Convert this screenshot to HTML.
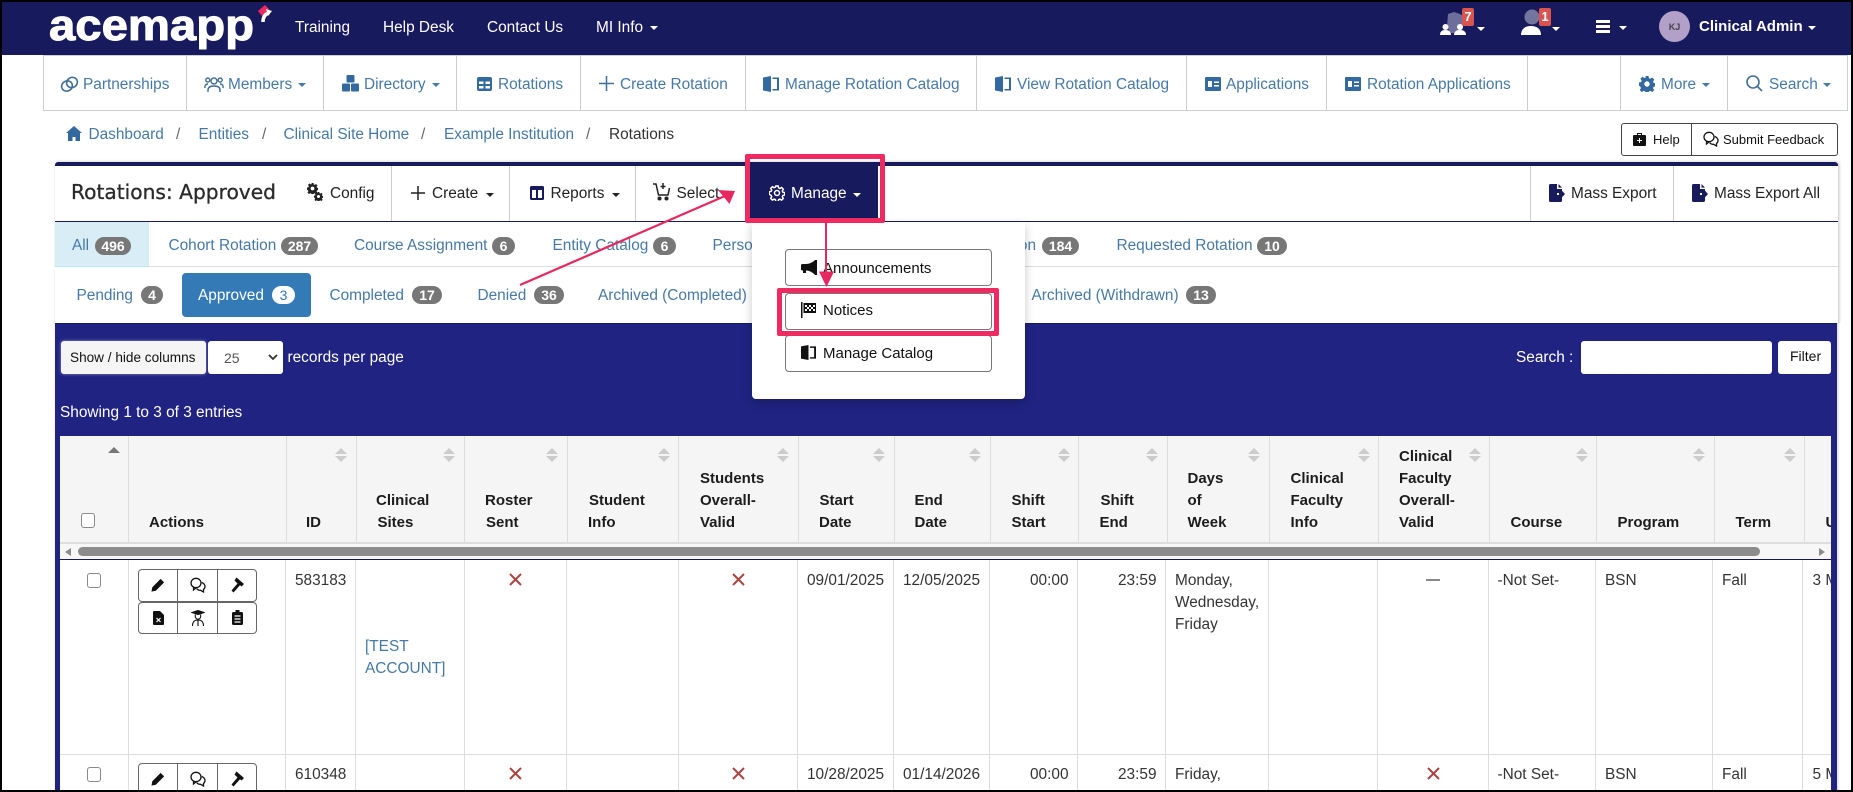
<!DOCTYPE html>
<html><head><meta charset="utf-8"><title>Rotations: Approved</title>
<style>
html,body{margin:0;padding:0;background:#fff}
#r{position:relative;width:1853px;height:792px;overflow:hidden;background:#fff;font-family:"Liberation Sans",sans-serif;font-size:15.4px;color:#333;filter:blur(.35px)}
#r div,#r span,#r svg{position:absolute}
.t{white-space:nowrap;line-height:22px;height:22px;margin-top:1px}
.w{color:#fff}.b{color:#4679a6}.d{color:#222}.k{color:#111}
.h{font-weight:bold;color:#1c1c1c;font-size:15px}
.c{width:0;height:0;border-left:4px solid transparent;border-right:4px solid transparent;border-top:4.5px solid currentColor}
.v{width:1px;background:#ccc}
.g{background:#777;color:#fff;font-weight:bold;font-size:14px;height:18px;line-height:18px;border-radius:9px;text-align:center}
.su{width:0;height:0;border-left:6px solid transparent;border-right:6px solid transparent;border-bottom:6.5px solid #ccc;top:448px}
.sd{width:0;height:0;border-left:6px solid transparent;border-right:6px solid transparent;border-top:6.5px solid #ccc;top:456px}
.cb{width:12px;height:13px;border:1px solid #8a8a8a;border-radius:3px;background:#fff}
.ab{border:1px solid #666;border-radius:4px;background:#fff;box-sizing:border-box}
.dd{left:785px;width:207px;height:37px;box-sizing:border-box;border:1px solid #777;border-radius:4px;background:#fff}
</style></head><body><div id="r">

<svg width="0" height="0" style="left:0;top:0"><defs>
<symbol id="cat" viewBox="0 0 16 16"><path fill="currentColor" d="M0 1.500L8 0v16L0 14.500zM9.500 1.500H16v13H9.500v-1.500H14V3H9.500z"/></symbol>
<symbol id="idc" viewBox="0 0 16 14"><path fill="currentColor" fill-rule="evenodd" d="M1 0h14a1 1 0 0 1 1 1v12a1 1 0 0 1-1 1H1a1 1 0 0 1-1-1V1a1 1 0 0 1 1-1zM3 4v6h4V4zM9 4.500V6h5V4.500zM9 8v1.500h5V8z"/></symbol>
<symbol id="exp" viewBox="0 0 16 18"><path fill="currentColor" d="M1.500 0H8v5h5v4H8v2h5v5.500a1.500 1.500 0 0 1-1.500 1.500h-10A1.500 1.500 0 0 1 0 16.500V1.500A1.500 1.500 0 0 1 1.500 0zM9.500 0L13 3.600H9.500zM13 6.800l3 3.200-3 3.200V11h-3V9h3z"/></symbol>
<symbol id="pen" viewBox="0 0 16 16"><path fill="currentColor" d="M11 1l4 4-9.500 9.500L0.500 15.500l1-5z"/></symbol>
<symbol id="cmt" viewBox="0 0 16 16"><g fill="none" stroke="currentColor" stroke-width="1.300"><ellipse cx="6" cy="6" rx="5" ry="4.700"/><path d="M3.500 10v3l3-2.500"/><path d="M11.800 5.500c2 .8 3.200 2.300 3.200 4 0 1.200-.6 2.200-1.500 2.900v2.600l-3-1.700c-1.500 0-3-.6-3.800-1.700"/></g></symbol>
<symbol id="gav" viewBox="0 0 16 16"><path fill="currentColor" d="M6.500 .5L14 7l-2.500 2.500L10 8.200 3.500 15.500 1.500 13.500 7.500 6.500 4.500 3.500z"/></symbol>
<symbol id="gear" viewBox="0 0 16 16"><path fill="currentColor" fill-rule="evenodd" d="M6.500 0h3l.4 2.200 1.400.6 1.900-1.300 2.100 2.100-1.300 1.900.6 1.400 2.200.4v3l-2.200.4-.6 1.400 1.300 1.900-2.100 2.100-1.900-1.300-1.400.6-.4 2.200h-3l-.4-2.200-1.400-.6-1.900 1.300-2.100-2.100 1.300-1.900-.6-1.400L-.1 9.500v-3l2.200-.4.6-1.400L1.400 2.800l2.100-2.100 1.900 1.300 1.400-.6zM8 5.300a2.700 2.700 0 1 0 0 5.400 2.700 2.700 0 0 0 0-5.400z"/></symbol>
</defs></svg>

<!-- header -->
<div style="left:0;top:0;width:1853px;height:55px;background:#181a5e"></div>
<svg style="left:44px;top:0" width="240" height="55" viewBox="0 0 240 55"><text x="5" y="40" font-family="Liberation Sans" font-weight="bold" font-size="44" fill="#fff" stroke="#fff" stroke-width="1" stroke-linejoin="round" textLength="205" lengthAdjust="spacingAndGlyphs">acemapp</text><path d="M214 11l7-6 4 4-7 7z" fill="#ee2a60"/><path d="M219 22c0-5 2-8 6-9" fill="none" stroke="#fff" stroke-width="3.500"/><path d="M222 9l6 2-4 5z" fill="#fff"/></svg>
<span class="t w" style="left:295px;top:16px">Training</span>
<span class="t w" style="left:383px;top:16px">Help Desk</span>
<span class="t w" style="left:487px;top:16px">Contact Us</span>
<span class="t w" style="left:596px;top:16px">MI Info</span>
<div class="c w" style="left:650px;top:26px"></div>

<svg style="left:1440px;top:10px" width="32" height="26" viewBox="0 0 32 26"><path d="M8 4l6-2 6 2 3 2v12l-3 5h-9l-4-6z" fill="#6d6e9c"/><circle cx="5.500" cy="17" r="3" fill="#fff"/><path d="M0 25c0-3.500 2-5 5.500-5s5.500 1.500 5.500 5z" fill="#fff"/><circle cx="20" cy="17" r="3" fill="#fff"/><path d="M14 25c0-3.500 2.500-5 6-5s6 1.500 6 5z" fill="#fff"/></svg>
<div style="left:1462px;top:8px;width:12px;height:18px;background:#d9534f;border-radius:2px"></div>
<span style="left:1462px;top:8px;width:12px;text-align:center;color:#fff;font-weight:bold;font-size:13px;line-height:18px">7</span>
<div class="c w" style="left:1477px;top:27px"></div>
<svg style="left:1521px;top:9px" width="22" height="27" viewBox="0 0 22 27"><circle cx="11" cy="8" r="7.500" fill="#74759f"/><path d="M0 26c0-6 4-9 10-9s10 3 10 9z" fill="#fff"/></svg>
<div style="left:1539px;top:8px;width:12px;height:18px;background:#d9534f;border-radius:2px"></div>
<span style="left:1539px;top:8px;width:12px;text-align:center;color:#fff;font-weight:bold;font-size:13px;line-height:18px">1</span>
<div class="c w" style="left:1552px;top:27px"></div>
<div style="left:1596px;top:20px;width:14px;height:2.500px;background:#fff"></div>
<div style="left:1596px;top:25px;width:14px;height:2.500px;background:#fff"></div>
<div style="left:1596px;top:30px;width:14px;height:2.500px;background:#fff"></div>
<div class="c w" style="left:1619px;top:26px"></div>
<div style="left:1659px;top:11px;width:31px;height:31px;border-radius:50%;background:#b3a0c8"></div>
<span style="left:1659px;top:11px;width:31px;text-align:center;line-height:32px;font-size:9px;font-weight:bold;color:#444">KJ</span>
<span class="t w" style="left:1699px;top:15px;font-weight:bold;font-size:15px">Clinical Admin</span>
<div class="c w" style="left:1808px;top:26px"></div>

<!-- secondary nav -->
<div style="left:43px;top:55px;width:1805px;height:56px;box-sizing:border-box;border:1px solid #ccced8;background:#fff"></div>
<div class="v" style="left:186px;top:55px;height:56px"></div>
<div class="v" style="left:323px;top:55px;height:56px"></div>
<div class="v" style="left:456px;top:55px;height:56px"></div>
<div class="v" style="left:580px;top:55px;height:56px"></div>
<div class="v" style="left:745px;top:55px;height:56px"></div>
<div class="v" style="left:976px;top:55px;height:56px"></div>
<div class="v" style="left:1186px;top:55px;height:56px"></div>
<div class="v" style="left:1326px;top:55px;height:56px"></div>
<div class="v" style="left:1527px;top:55px;height:56px"></div>
<div class="v" style="left:1620px;top:55px;height:56px"></div>
<div class="v" style="left:1727px;top:55px;height:56px"></div>

<svg style="left:60px;top:76px" width="19" height="17" viewBox="0 0 19 17" fill="none" stroke="#3f6f96" stroke-width="1.600"><ellipse cx="12" cy="6.500" rx="5.500" ry="5" transform="rotate(-30 12 6.500)"/><ellipse cx="7" cy="10" rx="5.500" ry="5" transform="rotate(-30 7 10)"/></svg>
<span class="t b" style="left:83px;top:73px">Partnerships</span>
<svg style="left:204px;top:75px" width="20" height="18" viewBox="0 0 20 18" fill="none" stroke="#3f6f96" stroke-width="1.400"><circle cx="10" cy="6" r="3"/><path d="M4 17v-2c0-3 2.500-4 6-4s6 1 6 4v2"/><circle cx="3.800" cy="5" r="2"/><circle cx="16.200" cy="5" r="2"/><path d="M1 13c-.5-2 .5-4 3-4M19 13c.5-2-.5-4-3-4"/></svg>
<span class="t b" style="left:228px;top:73px">Members</span>
<div class="c b" style="left:298px;top:83px"></div>
<svg style="left:342px;top:75px" width="17" height="17" viewBox="0 0 17 17" fill="#33699e"><rect x="4.500" y="0" width="8" height="7.500" rx="1"/><rect x="0" y="8.500" width="8" height="8" rx="1"/><rect x="9" y="8.500" width="8" height="8" rx="1"/></svg>
<span class="t b" style="left:364px;top:73px">Directory</span>
<div class="c b" style="left:432px;top:83px"></div>
<svg style="left:477px;top:77px" width="15" height="14" viewBox="0 0 15 14"><rect width="15" height="14" rx="2" fill="#33699e"/><path d="M2 4.500h4.500V7H2zM8.500 4.500H13V7H8.500zM2 9h4.500v2.500H2zM8.500 9H13v2.500H8.500z" fill="#fff"/></svg>
<span class="t b" style="left:498px;top:73px">Rotations</span>
<svg style="left:599px;top:76px" width="15" height="15" viewBox="0 0 15 15" stroke="#3f6f96" stroke-width="1.500"><path d="M7.500 0v15M0 7.500h15"/></svg>
<span class="t b" style="left:620px;top:73px">Create Rotation</span>
<svg style="left:763px;top:76px;color:#33699e" width="16" height="16"><use href="#cat"/></svg>
<span class="t b" style="left:785px;top:73px">Manage Rotation Catalog</span>
<svg style="left:995px;top:76px;color:#33699e" width="16" height="16"><use href="#cat"/></svg>
<span class="t b" style="left:1017px;top:73px">View Rotation Catalog</span>
<svg style="left:1205px;top:77px;color:#33699e" width="16" height="14"><use href="#idc"/></svg>
<span class="t b" style="left:1226px;top:73px">Applications</span>
<svg style="left:1345px;top:77px;color:#33699e" width="16" height="14"><use href="#idc"/></svg>
<span class="t b" style="left:1367px;top:73px">Rotation Applications</span>
<svg style="left:1639px;top:76px;color:#33699e" width="16" height="16"><use href="#gear"/></svg>
<span class="t b" style="left:1661px;top:73px">More</span>
<div class="c b" style="left:1702px;top:83px"></div>
<svg style="left:1746px;top:75px" width="17" height="17" viewBox="0 0 17 17" fill="none" stroke="#3f6f96" stroke-width="1.600"><circle cx="7" cy="7" r="6"/><path d="M11 11l5 5"/></svg>
<span class="t b" style="left:1769px;top:73px">Search</span>
<div class="c b" style="left:1823px;top:83px"></div>

<!-- breadcrumb -->
<svg style="left:66px;top:126px" width="16" height="15" viewBox="0 0 16 15" fill="#33699e"><path d="M8 0l8 7h-2v8H9.500v-4h-3v4H2V7H0z"/></svg>
<span class="t b" style="left:88.500px;top:123px">Dashboard</span>
<span class="t" style="left:176px;top:123px;color:#666">/</span>
<span class="t b" style="left:198.500px;top:123px">Entities</span>
<span class="t" style="left:262px;top:123px;color:#666">/</span>
<span class="t b" style="left:283.500px;top:123px">Clinical Site Home</span>
<span class="t" style="left:421px;top:123px;color:#666">/</span>
<span class="t b" style="left:444px;top:123px">Example Institution</span>
<span class="t" style="left:586px;top:123px;color:#666">/</span>
<span class="t" style="left:609px;top:123px;color:#333">Rotations</span>

<div style="left:1621px;top:123px;width:217px;height:33px;box-sizing:border-box;border:1px solid #444;border-radius:3px"></div>
<div style="left:1691px;top:123px;width:1px;height:33px;background:#444"></div>
<svg style="left:1633px;top:132px" width="13" height="14" viewBox="0 0 13 14" fill="#111"><path d="M4 3V1h5v2h3a1 1 0 0 1 1 1v9a1 1 0 0 1-1 1H1a1 1 0 0 1-1-1V4a1 1 0 0 1 1-1zM5 2v1h3V2z"/><path d="M6 6h1v2h2v1H7v2H6V9H4V8h2z" fill="#fff"/></svg>
<span class="t k" style="left:1653px;top:128px;font-size:13px">Help</span>
<svg style="left:1703px;top:131px;color:#111" width="16" height="16"><use href="#cmt"/></svg>
<span class="t k" style="left:1723px;top:128px;font-size:13px">Submit Feedback</span>

<!-- panel -->
<div style="left:55px;top:162px;width:1783px;height:630px;background:#fff;box-shadow:1px 0 3px rgba(0,0,0,.25)"></div>
<div style="left:55px;top:162px;width:1783px;height:4px;background:#181a5e;border-radius:3px 3px 0 0"></div>
<div style="left:55px;top:221px;width:1783px;height:1px;background:#181a5e"></div>
<span class="t" style="left:71px;top:180px;font-family:'DejaVu Sans',sans-serif;font-size:20.200px;color:#2a2a2a;-webkit-text-stroke:.3px #2a2a2a">Rotations: Approved</span>
<div class="v" style="left:391px;top:166px;height:55px"></div>
<div class="v" style="left:509px;top:166px;height:55px"></div>
<div class="v" style="left:635px;top:166px;height:55px"></div>
<div class="v" style="left:1530px;top:166px;height:55px"></div>
<div class="v" style="left:1673px;top:166px;height:55px"></div>

<svg style="left:307px;top:183px;color:#222" width="11" height="11"><use href="#gear"/></svg>
<svg style="left:314px;top:192px;color:#222" width="9" height="9"><use href="#gear"/></svg>
<span class="t d" style="left:330px;top:182px">Config</span>
<svg style="left:411px;top:186px" width="14" height="14" stroke="#222" stroke-width="1.500"><path d="M7 0v14M0 7h14"/></svg>
<span class="t d" style="left:432px;top:182px">Create</span>
<div class="c d" style="left:486px;top:193px"></div>
<svg style="left:530px;top:186px" width="14" height="14" viewBox="0 0 14 14"><rect width="14" height="14" rx="1.500" fill="#181a5e"/><path d="M2 4h4v8H2zM8 4h4v8H8z" fill="#fff"/></svg>
<span class="t d" style="left:550.500px;top:182px">Reports</span>
<div class="c d" style="left:612px;top:193px"></div>
<svg style="left:653px;top:183px" width="18" height="18" viewBox="0 0 18 18" fill="none" stroke="#222" stroke-width="1.500"><path d="M0 1h3l2.500 11H15l1.500-7"/><path d="M10 0v6M7.500 3.500H12.500"/><circle cx="6.500" cy="15.500" r="1.300" fill="#222"/><circle cx="13.500" cy="15.500" r="1.300" fill="#222"/></svg>
<span class="t d" style="left:676.500px;top:182px">Select</span>

<svg style="left:1549px;top:184px;color:#181a5e" width="16" height="18"><use href="#exp"/></svg>
<span class="t d" style="left:1571px;top:182px">Mass Export</span>
<svg style="left:1692px;top:184px;color:#181a5e" width="16" height="18"><use href="#exp"/></svg>
<span class="t d" style="left:1714px;top:182px">Mass Export All</span>

<!-- tabs row 1 -->
<div style="left:55px;top:222px;width:94px;height:45px;background:#d9edf7;border-bottom:1px solid #bce8f1;box-sizing:border-box"></div>
<div style="left:149px;top:266px;width:1689px;height:1px;background:#ddd"></div>
<span class="t b" style="left:72px;top:234px">All</span><span class="g" style="left:95px;top:237px;width:36px">496</span>
<span class="t b" style="left:168.500px;top:234px">Cohort Rotation</span><span class="g" style="left:281px;top:237px;width:37px">287</span>
<span class="t b" style="left:354px;top:234px">Course Assignment</span><span class="g" style="left:492px;top:237px;width:23px">6</span>
<span class="t b" style="left:552.500px;top:234px">Entity Catalog</span><span class="g" style="left:653px;top:237px;width:23px">6</span>
<span class="t b" style="left:712.500px;top:234px">Personal Rotation</span>
<span class="t b" style="left:978.700px;top:234px">Rotation</span><span class="g" style="left:1042px;top:237px;width:37px">184</span>
<span class="t b" style="left:1116.500px;top:234px">Requested Rotation</span><span class="g" style="left:1257px;top:237px;width:30px">10</span>

<!-- tabs row 2 -->
<div style="left:182px;top:273px;width:129px;height:44px;background:#337ab7;border-radius:4px"></div>
<span class="t b" style="left:76.500px;top:284px">Pending</span><span class="g" style="left:141px;top:286px;width:22px">4</span>
<span class="t w" style="left:198px;top:284px">Approved</span><span class="g" style="left:272px;top:286px;width:23px;background:#fff;color:#337ab7;font-weight:normal">3</span>
<span class="t b" style="left:329.500px;top:284px">Completed</span><span class="g" style="left:412px;top:286px;width:30px">17</span>
<span class="t b" style="left:477.500px;top:284px">Denied</span><span class="g" style="left:534px;top:286px;width:30px">36</span>
<span class="t b" style="left:598px;top:284px">Archived (Completed)</span>
<span class="t b" style="left:1031.500px;top:284px">Archived (Withdrawn)</span><span class="g" style="left:1186px;top:286px;width:30px">13</span>

<!-- blue band -->
<div style="left:55px;top:323px;width:1782px;height:1px;background:#181a5e"></div>
<div style="left:55px;top:324px;width:1782px;height:468px;background:#202382"></div>
<div style="left:60.500px;top:341px;width:145px;height:33px;background:#f5f5f5;border-radius:3px;box-shadow:0 0 3px rgba(255,255,255,.5)"></div>
<span class="t k" style="left:70px;top:346px;font-size:13.600px">Show / hide columns</span>
<div style="left:208px;top:341px;width:75px;height:33px;background:#fff;border-radius:3px"></div>
<span class="t" style="left:224px;top:346px;color:#555;font-size:14px">25</span>
<svg style="left:268px;top:354px" width="10" height="7" fill="none" stroke="#333" stroke-width="1.800"><path d="M1 1l4 4 4-4"/></svg>
<span class="t w" style="left:287.500px;top:346px;font-size:15.400px">records per page</span>
<span class="t w" style="left:60px;top:401px">Showing 1 to 3 of 3 entries</span>
<span class="t w" style="left:1516px;top:346px">Search :</span>
<div style="left:1580.500px;top:341px;width:191px;height:33px;background:#fff;border-radius:3px"></div>
<div style="left:1778px;top:341px;width:52.500px;height:33px;background:#fff;border-radius:3px"></div>
<span class="t k" style="left:1790px;top:344px;font-size:14px">Filter</span>

<!-- table -->
<div style="left:60px;top:436px;width:1771px;height:356px;background:#fff"></div>
<div style="left:60px;top:436px;width:1771px;height:107px;background:#f5f5f5"></div>
<div style="left:60px;top:542px;width:1771px;height:2px;background:#ddd"></div>
<div style="left:60px;top:544px;width:1771px;height:15px;background:#f7f7f7"></div>
<div style="left:78px;top:547px;width:1682px;height:9px;background:#8c8c8c;border-radius:5px"></div>
<div style="left:65px;top:548px;width:0;height:0;border-right:6px solid #8c8c8c;border-top:4px solid transparent;border-bottom:4px solid transparent"></div>
<div style="left:1819px;top:548px;width:0;height:0;border-left:6px solid #8c8c8c;border-top:4px solid transparent;border-bottom:4px solid transparent"></div>
<div style="left:60px;top:559px;width:1771px;height:1px;background:#181a5e"></div>

<!-- th lines -->
<div class="v" style="left:128px;top:436px;height:106px;background:#ddd"></div><div class="v" style="left:286px;top:436px;height:106px;background:#ddd"></div><div class="v" style="left:356px;top:436px;height:106px;background:#ddd"></div><div class="v" style="left:464px;top:436px;height:106px;background:#ddd"></div><div class="v" style="left:567px;top:436px;height:106px;background:#ddd"></div><div class="v" style="left:678px;top:436px;height:106px;background:#ddd"></div><div class="v" style="left:798px;top:436px;height:106px;background:#ddd"></div><div class="v" style="left:894px;top:436px;height:106px;background:#ddd"></div><div class="v" style="left:990px;top:436px;height:106px;background:#ddd"></div><div class="v" style="left:1078px;top:436px;height:106px;background:#ddd"></div><div class="v" style="left:1167px;top:436px;height:106px;background:#ddd"></div><div class="v" style="left:1269px;top:436px;height:106px;background:#ddd"></div><div class="v" style="left:1378px;top:436px;height:106px;background:#ddd"></div><div class="v" style="left:1489px;top:436px;height:106px;background:#ddd"></div><div class="v" style="left:1596px;top:436px;height:106px;background:#ddd"></div><div class="v" style="left:1714px;top:436px;height:106px;background:#ddd"></div><div class="v" style="left:1804px;top:436px;height:106px;background:#ddd"></div>
<!-- td lines -->
<div class="v" style="left:128px;top:560px;height:232px;background:#ddd"></div><div class="v" style="left:285px;top:560px;height:232px;background:#ddd"></div><div class="v" style="left:355px;top:560px;height:232px;background:#ddd"></div><div class="v" style="left:464px;top:560px;height:232px;background:#ddd"></div><div class="v" style="left:566px;top:560px;height:232px;background:#ddd"></div><div class="v" style="left:678px;top:560px;height:232px;background:#ddd"></div><div class="v" style="left:797px;top:560px;height:232px;background:#ddd"></div><div class="v" style="left:893px;top:560px;height:232px;background:#ddd"></div><div class="v" style="left:989px;top:560px;height:232px;background:#ddd"></div><div class="v" style="left:1077px;top:560px;height:232px;background:#ddd"></div><div class="v" style="left:1165px;top:560px;height:232px;background:#ddd"></div><div class="v" style="left:1268px;top:560px;height:232px;background:#ddd"></div><div class="v" style="left:1377px;top:560px;height:232px;background:#ddd"></div><div class="v" style="left:1488px;top:560px;height:232px;background:#ddd"></div><div class="v" style="left:1595px;top:560px;height:232px;background:#ddd"></div><div class="v" style="left:1712px;top:560px;height:232px;background:#ddd"></div><div class="v" style="left:1802px;top:560px;height:232px;background:#ddd"></div>
<div style="left:60px;top:754px;width:1771px;height:1px;background:#ddd"></div>

<!-- sort icons -->
<div class="su" style="left:108px;top:447px;border-bottom-color:#777"></div>
<div class="su" style="left:335px"></div><div class="sd" style="left:335px"></div>
<div class="su" style="left:443px"></div><div class="sd" style="left:443px"></div>
<div class="su" style="left:546px"></div><div class="sd" style="left:546px"></div>
<div class="su" style="left:658px"></div><div class="sd" style="left:658px"></div>
<div class="su" style="left:777px"></div><div class="sd" style="left:777px"></div>
<div class="su" style="left:873px"></div><div class="sd" style="left:873px"></div>
<div class="su" style="left:969px"></div><div class="sd" style="left:969px"></div>
<div class="su" style="left:1058px"></div><div class="sd" style="left:1058px"></div>
<div class="su" style="left:1146px"></div><div class="sd" style="left:1146px"></div>
<div class="su" style="left:1248px"></div><div class="sd" style="left:1248px"></div>
<div class="su" style="left:1358px"></div><div class="sd" style="left:1358px"></div>
<div class="su" style="left:1469px"></div><div class="sd" style="left:1469px"></div>
<div class="su" style="left:1576px"></div><div class="sd" style="left:1576px"></div>
<div class="su" style="left:1693px"></div><div class="sd" style="left:1693px"></div>
<div class="su" style="left:1784px"></div><div class="sd" style="left:1784px"></div>

<!-- th text -->
<div class="cb" style="left:81px;top:513px"></div>
<span class="t h" style="left:149px;top:511px">Actions</span>
<span class="t h" style="left:306px;top:511px">ID</span>
<span class="t h" style="left:376px;top:489px">Clinical</span><span class="t h" style="left:377.500px;top:511px">Sites</span>
<span class="t h" style="left:485px;top:489px">Roster</span><span class="t h" style="left:486px;top:511px">Sent</span>
<span class="t h" style="left:589px;top:489px">Student</span><span class="t h" style="left:588px;top:511px">Info</span>
<span class="t h" style="left:700px;top:467px">Students</span><span class="t h" style="left:700px;top:489px">Overall-</span><span class="t h" style="left:700px;top:511px">Valid</span>
<span class="t h" style="left:819.500px;top:489px">Start</span><span class="t h" style="left:819px;top:511px">Date</span>
<span class="t h" style="left:914.500px;top:489px">End</span><span class="t h" style="left:914.500px;top:511px">Date</span>
<span class="t h" style="left:1011.500px;top:489px">Shift</span><span class="t h" style="left:1011.500px;top:511px">Start</span>
<span class="t h" style="left:1100.500px;top:489px">Shift</span><span class="t h" style="left:1099.500px;top:511px">End</span>
<span class="t h" style="left:1187.500px;top:467px">Days</span><span class="t h" style="left:1187.500px;top:489px">of</span><span class="t h" style="left:1187.500px;top:511px">Week</span>
<span class="t h" style="left:1290.500px;top:467px">Clinical</span><span class="t h" style="left:1290.500px;top:489px">Faculty</span><span class="t h" style="left:1290.500px;top:511px">Info</span>
<span class="t h" style="left:1399px;top:445px">Clinical</span><span class="t h" style="left:1399px;top:467px">Faculty</span><span class="t h" style="left:1399px;top:489px">Overall-</span><span class="t h" style="left:1399px;top:511px">Valid</span>
<span class="t h" style="left:1510.500px;top:511px">Course</span>
<span class="t h" style="left:1617.500px;top:511px">Program</span>
<span class="t h" style="left:1735.500px;top:511px">Term</span>
<span class="t h" style="left:1825.500px;top:511px">Units</span>

<!-- row 1 -->
<div class="cb" style="left:87px;top:573px"></div>
<div class="ab" style="left:138px;top:569px;width:119px;height:33px"></div>
<div class="ab" style="left:138px;top:602px;width:119px;height:32px"></div>
<div style="left:177px;top:569px;width:1px;height:65px;background:#666"></div>
<div style="left:217px;top:569px;width:1px;height:65px;background:#666"></div>
<svg style="left:151px;top:578px;color:#111" width="14" height="14"><use href="#pen"/></svg>
<svg style="left:190px;top:577px;color:#111" width="16" height="16"><use href="#cmt"/></svg>
<svg style="left:230px;top:577px;color:#111" width="16" height="16"><use href="#gav"/></svg>
<svg style="left:153px;top:611px" width="11" height="14" viewBox="0 0 11 14"><path d="M1 0h6l4 4v9a1 1 0 0 1-1 1H1a1 1 0 0 1-1-1V1a1 1 0 0 1 1-1z" fill="#111"/><path d="M3.500 7l4 4M7.500 7l-4 4" stroke="#fff" stroke-width="1.200"/></svg>
<svg style="left:191px;top:610px" width="14" height="16" viewBox="0 0 14 16" fill="none" stroke="#111" stroke-width="1.100"><path d="M1 2.500L7 .5l6 2-6 2z" fill="#111"/><path d="M4.300 4.500v2a2.700 2.700 0 0 0 5.400 0v-2"/><path d="M1.500 16c0-4 2-6 5.500-6s5.500 2 5.500 6M7 10.500v5.500"/></svg>
<svg style="left:232px;top:610px" width="11" height="15" viewBox="0 0 11 15"><path d="M1.500 2h8A1.500 1.500 0 0 1 11 3.500v10A1.500 1.500 0 0 1 9.500 15h-8A1.500 1.500 0 0 1 0 13.500v-10A1.500 1.500 0 0 1 1.500 2zM3.500 0h4v3h-4z" fill="#111"/><path d="M2.500 6h6M2.500 9h6M2.500 12h6" stroke="#fff" stroke-width="1.200"/></svg>
<span class="t" style="left:295px;top:569px">583183</span>
<span class="t b" style="left:365px;top:635px">[TEST</span><span class="t b" style="left:365px;top:657px">ACCOUNT]</span>
<svg style="left:509px;top:573px" width="13" height="13" stroke="#a94442" stroke-width="2" fill="none"><path d="M1 1l11 11M12 1L1 12"/></svg>
<svg style="left:732px;top:573px" width="13" height="13" stroke="#a94442" stroke-width="2" fill="none"><path d="M1 1l11 11M12 1L1 12"/></svg>
<span class="t" style="left:807px;top:569px">09/01/2025</span>
<span class="t" style="left:903px;top:569px">12/05/2025</span>
<span class="t" style="left:1030px;top:569px">00:00</span>
<span class="t" style="left:1118px;top:569px">23:59</span>
<span class="t" style="left:1175px;top:569px">Monday,</span><span class="t" style="left:1175px;top:591px">Wednesday,</span><span class="t" style="left:1175px;top:613px">Friday</span>
<div style="left:1426px;top:579px;width:14px;height:1.500px;background:#888"></div>
<span class="t" style="left:1497.500px;top:569px">-Not Set-</span>
<span class="t" style="left:1605px;top:569px">BSN</span>
<span class="t" style="left:1722px;top:569px">Fall</span>
<span class="t" style="left:1812.500px;top:569px">3 Months</span>

<!-- row 2 -->
<div class="cb" style="left:87px;top:767px"></div>
<div class="ab" style="left:138px;top:763px;width:119px;height:40px"></div>
<div style="left:177px;top:763px;width:1px;height:29px;background:#666"></div>
<div style="left:217px;top:763px;width:1px;height:29px;background:#666"></div>
<svg style="left:151px;top:772px;color:#111" width="14" height="14"><use href="#pen"/></svg>
<svg style="left:190px;top:771px;color:#111" width="16" height="16"><use href="#cmt"/></svg>
<svg style="left:230px;top:771px;color:#111" width="16" height="16"><use href="#gav"/></svg>
<span class="t" style="left:295px;top:763px">610348</span>
<svg style="left:509px;top:767px" width="13" height="13" stroke="#a94442" stroke-width="2" fill="none"><path d="M1 1l11 11M12 1L1 12"/></svg>
<svg style="left:732px;top:767px" width="13" height="13" stroke="#a94442" stroke-width="2" fill="none"><path d="M1 1l11 11M12 1L1 12"/></svg>
<span class="t" style="left:807px;top:763px">10/28/2025</span>
<span class="t" style="left:903px;top:763px">01/14/2026</span>
<span class="t" style="left:1030px;top:763px">00:00</span>
<span class="t" style="left:1118px;top:763px">23:59</span>
<span class="t" style="left:1175px;top:763px">Friday,</span>
<svg style="left:1427px;top:767px" width="13" height="13" stroke="#a94442" stroke-width="2" fill="none"><path d="M1 1l11 11M12 1L1 12"/></svg>
<span class="t" style="left:1497.500px;top:763px">-Not Set-</span>
<span class="t" style="left:1605px;top:763px">BSN</span>
<span class="t" style="left:1722px;top:763px">Fall</span>
<span class="t" style="left:1812.500px;top:763px">5 Months</span>

<!-- right blue side -->
<div style="left:1831px;top:436px;width:6px;height:356px;background:#202382"></div>
<div style="left:1837px;top:323px;width:14px;height:469px;background:#fff"></div>
<div style="left:1837px;top:323px;width:3px;height:469px;background:linear-gradient(90deg,#ddd,#fff)"></div>

<!-- dropdown -->
<div style="left:752px;top:222px;width:273px;height:177px;background:#fff;border-radius:0 0 4px 4px;box-shadow:0 4px 10px rgba(0,0,0,.22)"></div>
<div class="dd" style="top:249px"></div>
<div class="dd" style="top:293px"></div>
<div class="dd" style="top:335px"></div>
<svg style="left:801px;top:260px" width="16" height="15" viewBox="0 0 16 15" fill="#111"><path d="M14 0h2v15h-2l-1-1C11 12 8 10.500 5 10.500V13H2v-2.500a3 3 0 0 1 0-6.500h3c3 0 6-1.500 8-3z"/></svg>
<span class="t k" style="left:823px;top:256.500px;font-size:15px">Announcements</span>
<svg style="left:801px;top:302px" width="15" height="16" viewBox="0 0 15 16"><path d="M0 0h1.500v16H0zM2.500 1H15v10H2.500z" fill="#111"/><path d="M4 3h2v2H4zM8 3h2v2H8zM12 3h2v2h-2zM6 5h2v2H6zM10 5h2v2h-2zM4 7h2v2H4zM8 7h2v2H8zM12 7h2v2h-2z" fill="#fff"/></svg>
<span class="t k" style="left:823px;top:299px;font-size:15px">Notices</span>
<svg style="left:801px;top:345px;color:#111" width="15" height="15"><use href="#cat"/></svg>
<span class="t k" style="left:823px;top:341.500px;font-size:15px">Manage Catalog</span>

<!-- Manage button -->
<div style="left:750px;top:163px;width:128px;height:55px;background:#181a5e"></div>
<svg style="left:769px;top:185px;color:#fff" width="16" height="16" viewBox="0 0 16 16"><g fill="none" stroke="#fff" stroke-width="1.500"><circle cx="8" cy="8" r="2.500"/><path d="M6.800 1h2.400l.4 1.900 1.300.6 1.700-1 1.700 1.700-1 1.700.6 1.300 1.900.4v2.400l-1.900.4-.6 1.300 1 1.700-1.700 1.700-1.700-1-1.300.6-.4 1.900H6.800l-.4-1.900-1.300-.6-1.700 1-1.700-1.700 1-1.700-.6-1.300L.2 9.200V6.800l1.900-.4.6-1.300-1-1.700 1.700-1.700 1.700 1 1.300-.6z"/></g></svg>
<span class="t w" style="left:791px;top:182px">Manage</span>
<div class="c w" style="left:853px;top:193px"></div>

<!-- annotations -->
<div style="left:745px;top:154px;width:140px;height:69px;box-sizing:border-box;border:5.500px solid #ee2a60;border-radius:2px"></div>
<div style="left:777px;top:288px;width:222px;height:48px;box-sizing:border-box;border:5.500px solid #ee2a60;border-radius:2px"></div>
<svg style="left:0;top:0" width="1853" height="792" fill="#e6285e" stroke="none"><path d="M520 285L725 196" stroke="#e6285e" stroke-width="2.200" fill="none"/><path d="M735 191L718 190L729.500 204z"/><path d="M826 222V274" stroke="#e6285e" stroke-width="2" fill="none"/><path d="M819 271.500H834L826.500 287z"/></svg>

<!-- black frame -->
<div style="left:0;top:0;width:1853px;height:2px;background:#000"></div>
<div style="left:0;top:790px;width:1853px;height:2px;background:#000"></div>
<div style="left:0;top:0;width:2px;height:792px;background:#000"></div>
<div style="left:1851px;top:0;width:2px;height:792px;background:#000"></div>
</div></body></html>
